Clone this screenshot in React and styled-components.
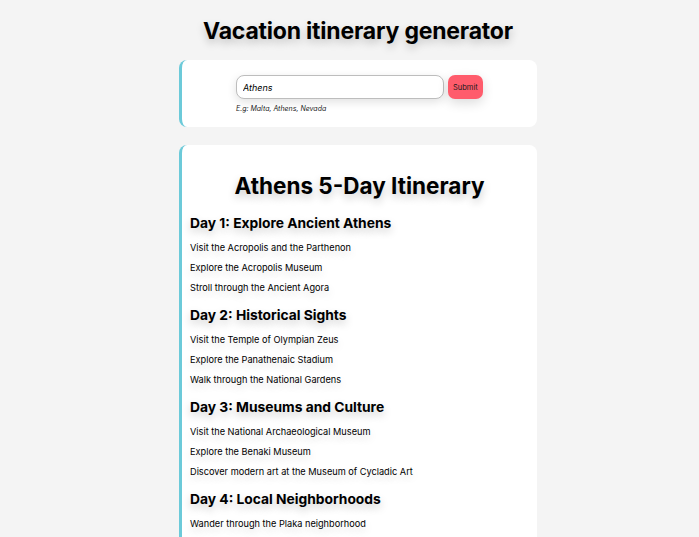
import styled, { createGlobalStyle } from 'styled-components';

const GlobalStyle = createGlobalStyle`
  html, body {
    margin: 0;
    padding: 0;
    background: #f4f4f4;
    font-family: Inter, "Noto Sans", sans-serif;
    color: #000;
  }
`;

const itinerary = [
  {
    title: 'Day 1: Explore Ancient Athens',
    items: [
      'Visit the Acropolis and the Parthenon',
      'Explore the Acropolis Museum',
      'Stroll through the Ancient Agora',
    ],
  },
  {
    title: 'Day 2: Historical Sights',
    items: [
      'Visit the Temple of Olympian Zeus',
      'Explore the Panathenaic Stadium',
      'Walk through the National Gardens',
    ],
  },
  {
    title: 'Day 3: Museums and Culture',
    items: [
      'Visit the National Archaeological Museum',
      'Explore the Benaki Museum',
      'Discover modern art at the Museum of Cycladic Art',
    ],
  },
  {
    title: 'Day 4: Local Neighborhoods',
    items: [
      'Wander through the Plaka neighborhood',
      'Shop at the Monastiraki Flea Market',
      'Explore the hidden streets of Anafiotika',
    ],
  },
  {
    title: 'Day 5: Coastal Escape',
    items: [
      'Take a day trip to Cape Sounion',
      'Watch the sunset at the Temple of Poseidon',
      'Relax on the beaches of the Athens Riviera',
    ],
  },
];

const App = () => {
  return (
    <>
      <GlobalStyle />
      <Page>
        <Title>Vacation itinerary generator</Title>
        <Card>
          <Form onSubmit={(e) => e.preventDefault()}>
            <InputRow>
              <CityInput defaultValue='Athens' />
              <SubmitButton type='submit'>Submit</SubmitButton>
            </InputRow>
            <Hint>E.g: Malta, Athens, Nevada</Hint>
          </Form>
        </Card>
        <ResultCard>
          <ResultTitle>Athens 5-Day Itinerary</ResultTitle>
          {itinerary.map((day) => (
            <section key={day.title}>
              <DayTitle>{day.title}</DayTitle>
              {day.items.map((item) => (
                <Item key={item}>{item}</Item>
              ))}
            </section>
          ))}
        </ResultCard>
      </Page>
    </>
  );
};

export default App;

const Page = styled.main`
  display: flex;
  flex-direction: column;
  align-items: center;
  padding: 16px 0 24px 17px;
`;

const Title = styled.h1`
  margin: 0 0 14px;
  font-size: 23px;
  font-weight: 700;
  line-height: 30px;
  letter-spacing: -0.2px;
  text-shadow: 0 4px 8px rgba(0, 0, 0, 0.22);
`;

const Card = styled.div`
  box-sizing: border-box;
  width: 358px;
  padding: 15px 0 14px;
  background: #fff;
  border-radius: 8px;
  border-left: 3px solid #6ccad9;
`;

const Form = styled.form`
  display: flex;
  flex-direction: column;
  align-items: flex-start;
  width: 248px;
  margin: 0 auto;
  padding-left: 1px;
`;

const InputRow = styled.div`
  display: flex;
  align-items: center;
  gap: 4px;
`;

const CityInput = styled.input`
  box-sizing: border-box;
  width: 208px;
  height: 24px;
  padding: 0 6px;
  border: 1px solid #bdbdbd;
  border-radius: 8px;
  font-family: Inter, "Noto Sans", sans-serif;
  font-size: 9px;
  font-style: italic;
  color: #000;
  box-shadow: 0 3px 10px rgba(0, 0, 0, 0.12);
  outline: none;
`;

const SubmitButton = styled.button`
  height: 24px;
  padding: 0 5px;
  border: none;
  border-radius: 7px;
  background: #ff5c6c;
  color: #1a1a1a;
  font-family: Inter, "Noto Sans", sans-serif;
  font-size: 7.5px;
  box-shadow: 0 4px 12px rgba(0, 0, 0, 0.14);
  cursor: pointer;
`;

const Hint = styled.small`
  margin-top: 5px;
  font-size: 7px;
  font-style: italic;
  color: #222;
`;

const ResultCard = styled.article`
  box-sizing: border-box;
  width: 358px;
  margin-top: 18px;
  padding: 24px 8px 12px;
  background: #fff;
  border-radius: 8px;
  border-left: 3px solid #6ccad9;
`;

const ResultTitle = styled.h2`
  margin: 1px 0 11px;
  text-align: center;
  font-size: 22.5px;
  font-weight: 700;
  line-height: 32px;
  text-shadow: 0 4px 8px rgba(0, 0, 0, 0.22);
`;

const DayTitle = styled.h3`
  margin: 0 0 9px;
  font-size: 13.8px;
  font-weight: 700;
  line-height: 20px;
  text-shadow: 0 4px 8px rgba(0, 0, 0, 0.22);
`;

const Item = styled.p`
  margin: 0 0 8px;
  font-size: 9.2px;
  line-height: 12px;
  text-shadow: 0 4px 8px rgba(0, 0, 0, 0.18);

  &:last-child {
    margin-bottom: 11px;
  }
`;
